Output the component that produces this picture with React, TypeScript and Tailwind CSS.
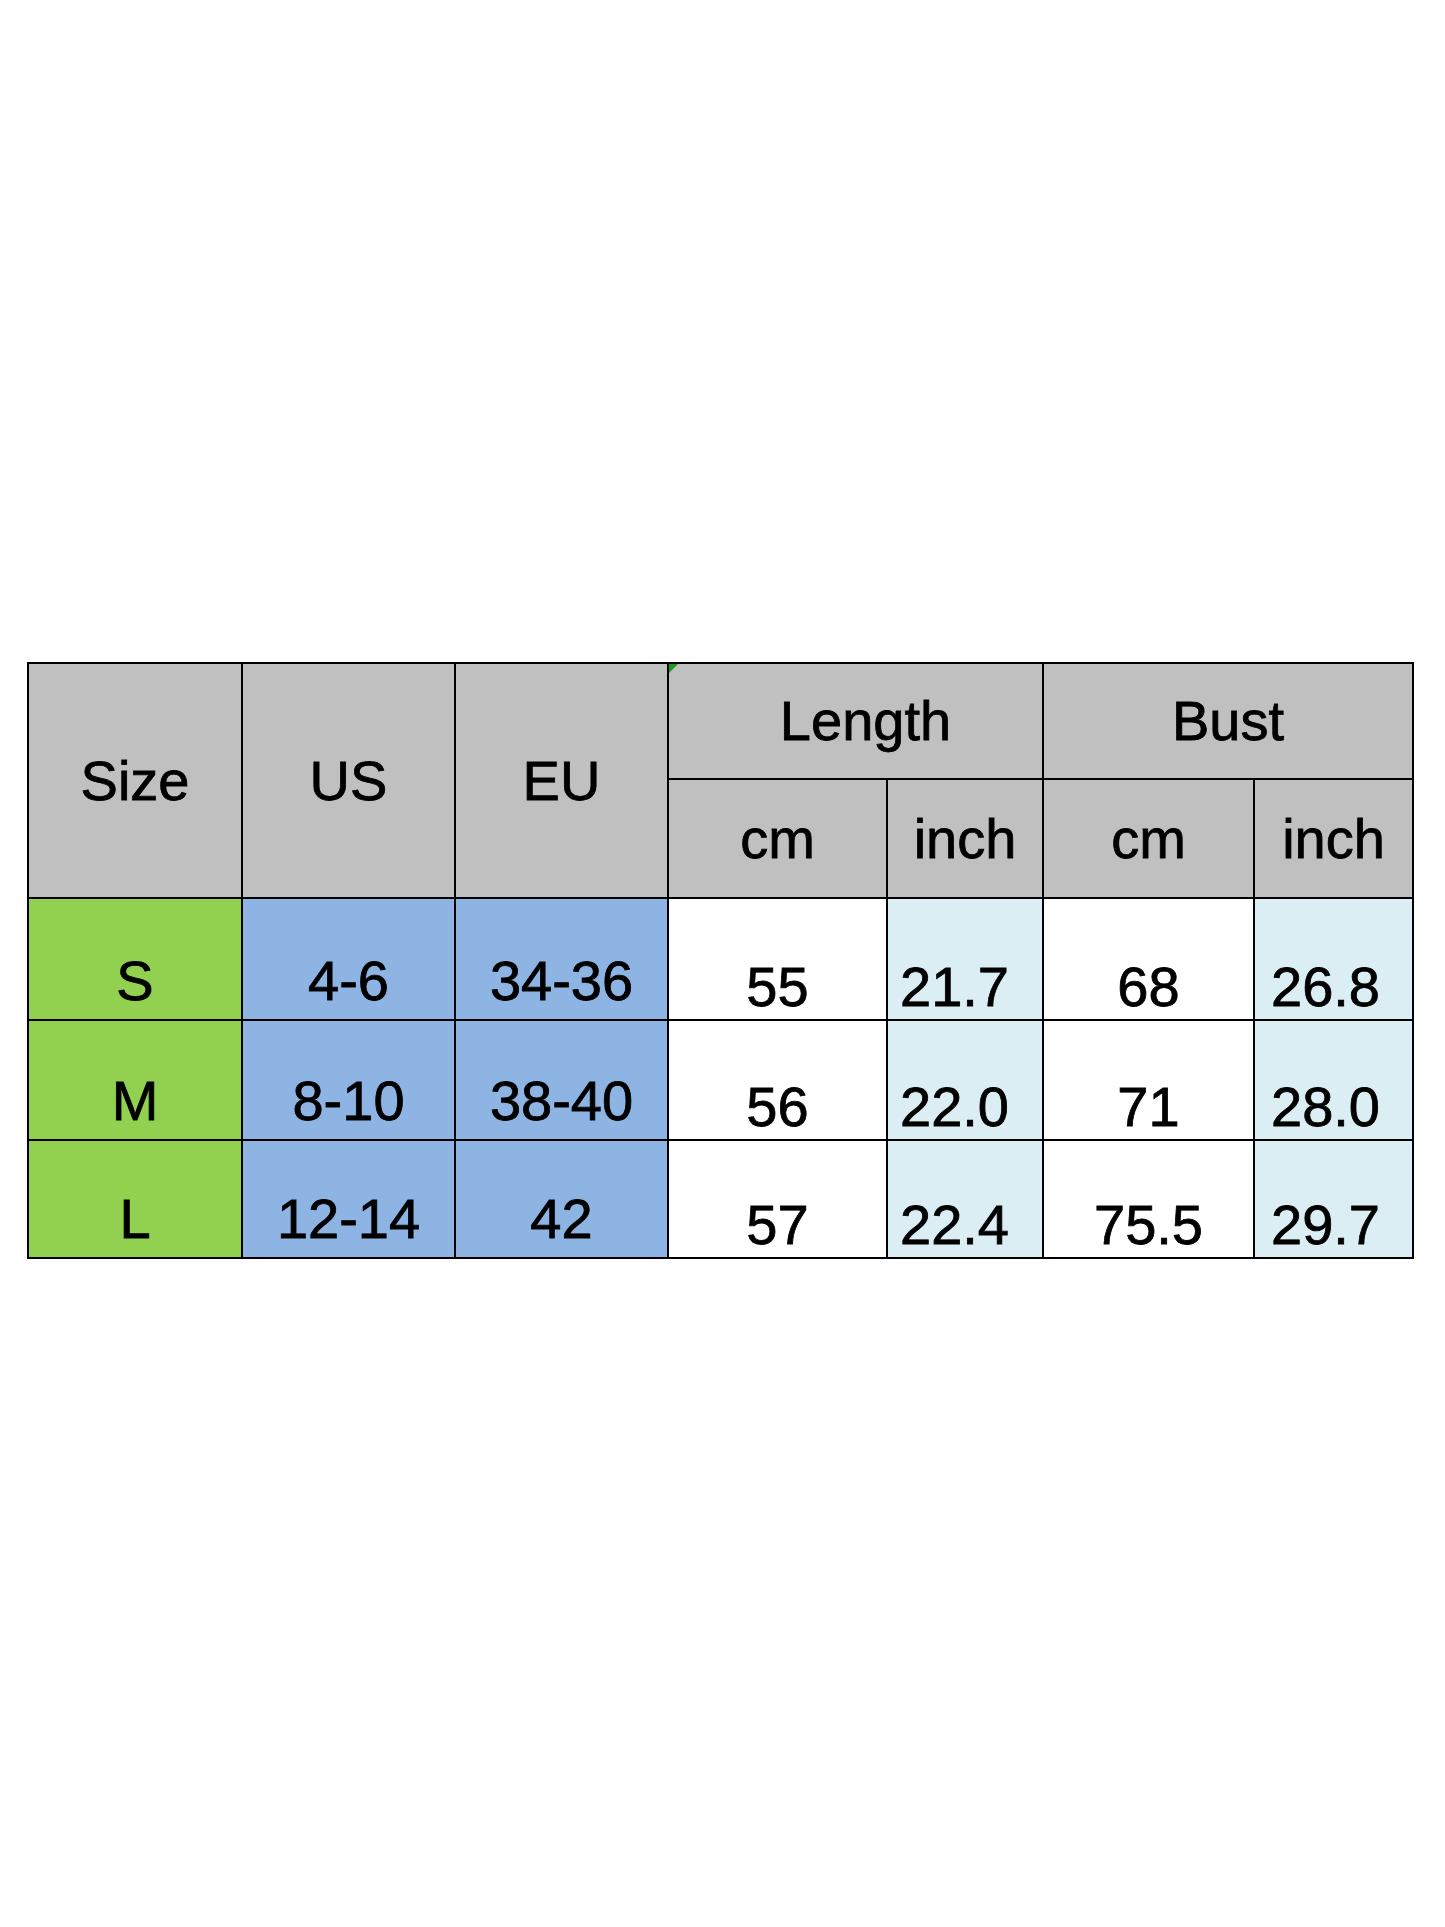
import React from 'react'

interface SizeRow {
  size: string
  us: string
  eu: string
  lenCm: string
  lenIn: string
  bustCm: string
  bustIn: string
}

const rows: SizeRow[] = [
  { size: 'S', us: '4-6', eu: '34-36', lenCm: '55', lenIn: '21.7', bustCm: '68', bustIn: '26.8' },
  { size: 'M', us: '8-10', eu: '38-40', lenCm: '56', lenIn: '22.0', bustCm: '71', bustIn: '28.0' },
  { size: 'L', us: '12-14', eu: '42', lenCm: '57', lenIn: '22.4', bustCm: '75.5', bustIn: '29.7' },
]

const font =
  "font-['Liberation_Sans',Arial,sans-serif] text-[56px] leading-[56px] text-black [-webkit-text-stroke:0.8px_#000]"

export default function App() {
  return (
    <div className="min-h-[1927px] w-full bg-white pl-[27px] pt-[662px]">
      <div
        className={`grid w-max grid-cols-[212px_211px_211px_217px_154px_209px_157px] grid-rows-[114px_117px_120px_118px_116px] gap-[2px] bg-black p-[2px] ${font}`}
      >
        {/* Header */}
        <div className="row-span-2 flex items-center justify-center bg-[#c0c0c0]">Size</div>
        <div className="row-span-2 flex items-center justify-center bg-[#c0c0c0]">US</div>
        <div className="row-span-2 flex items-center justify-center bg-[#c0c0c0]">EU</div>
        <div className="relative col-span-2 flex items-center justify-center bg-[#c0c0c0] pl-[20px]">
          Length
          {/* green indicator in the cell corner */}
          <span className="absolute left-0 top-0 h-0 w-0 border-r-[9px] border-t-[9px] border-r-transparent border-t-[#1a9a1a]" />
        </div>
        <div className="col-span-2 flex items-center justify-center bg-[#c0c0c0]">Bust</div>
        <div className="flex items-center justify-center bg-[#c0c0c0]">cm</div>
        <div className="flex items-center justify-center bg-[#c0c0c0]">inch</div>
        <div className="flex items-center justify-center bg-[#c0c0c0]">cm</div>
        <div className="flex items-center justify-center bg-[#c0c0c0]">inch</div>

        {/* Body */}
        {rows.map((r) => (
          <React.Fragment key={r.size}>
            <div className="flex items-end justify-center bg-[#92d050] pb-[10px]">{r.size}</div>
            <div className="flex items-end justify-center bg-[#8db4e2] pb-[10px]">{r.us}</div>
            <div className="flex items-end justify-center bg-[#8db4e2] pb-[10px]">{r.eu}</div>
            <div className="flex items-end justify-center bg-white pb-[4px]">{r.lenCm}</div>
            <div className="flex items-end justify-start bg-[#daeef3] pb-[4px] pl-[12px]">{r.lenIn}</div>
            <div className="flex items-end justify-center bg-white pb-[4px]">{r.bustCm}</div>
            <div className="flex items-end justify-start bg-[#daeef3] pb-[4px] pl-[16px]">{r.bustIn}</div>
          </React.Fragment>
        ))}
      </div>
    </div>
  )
}
